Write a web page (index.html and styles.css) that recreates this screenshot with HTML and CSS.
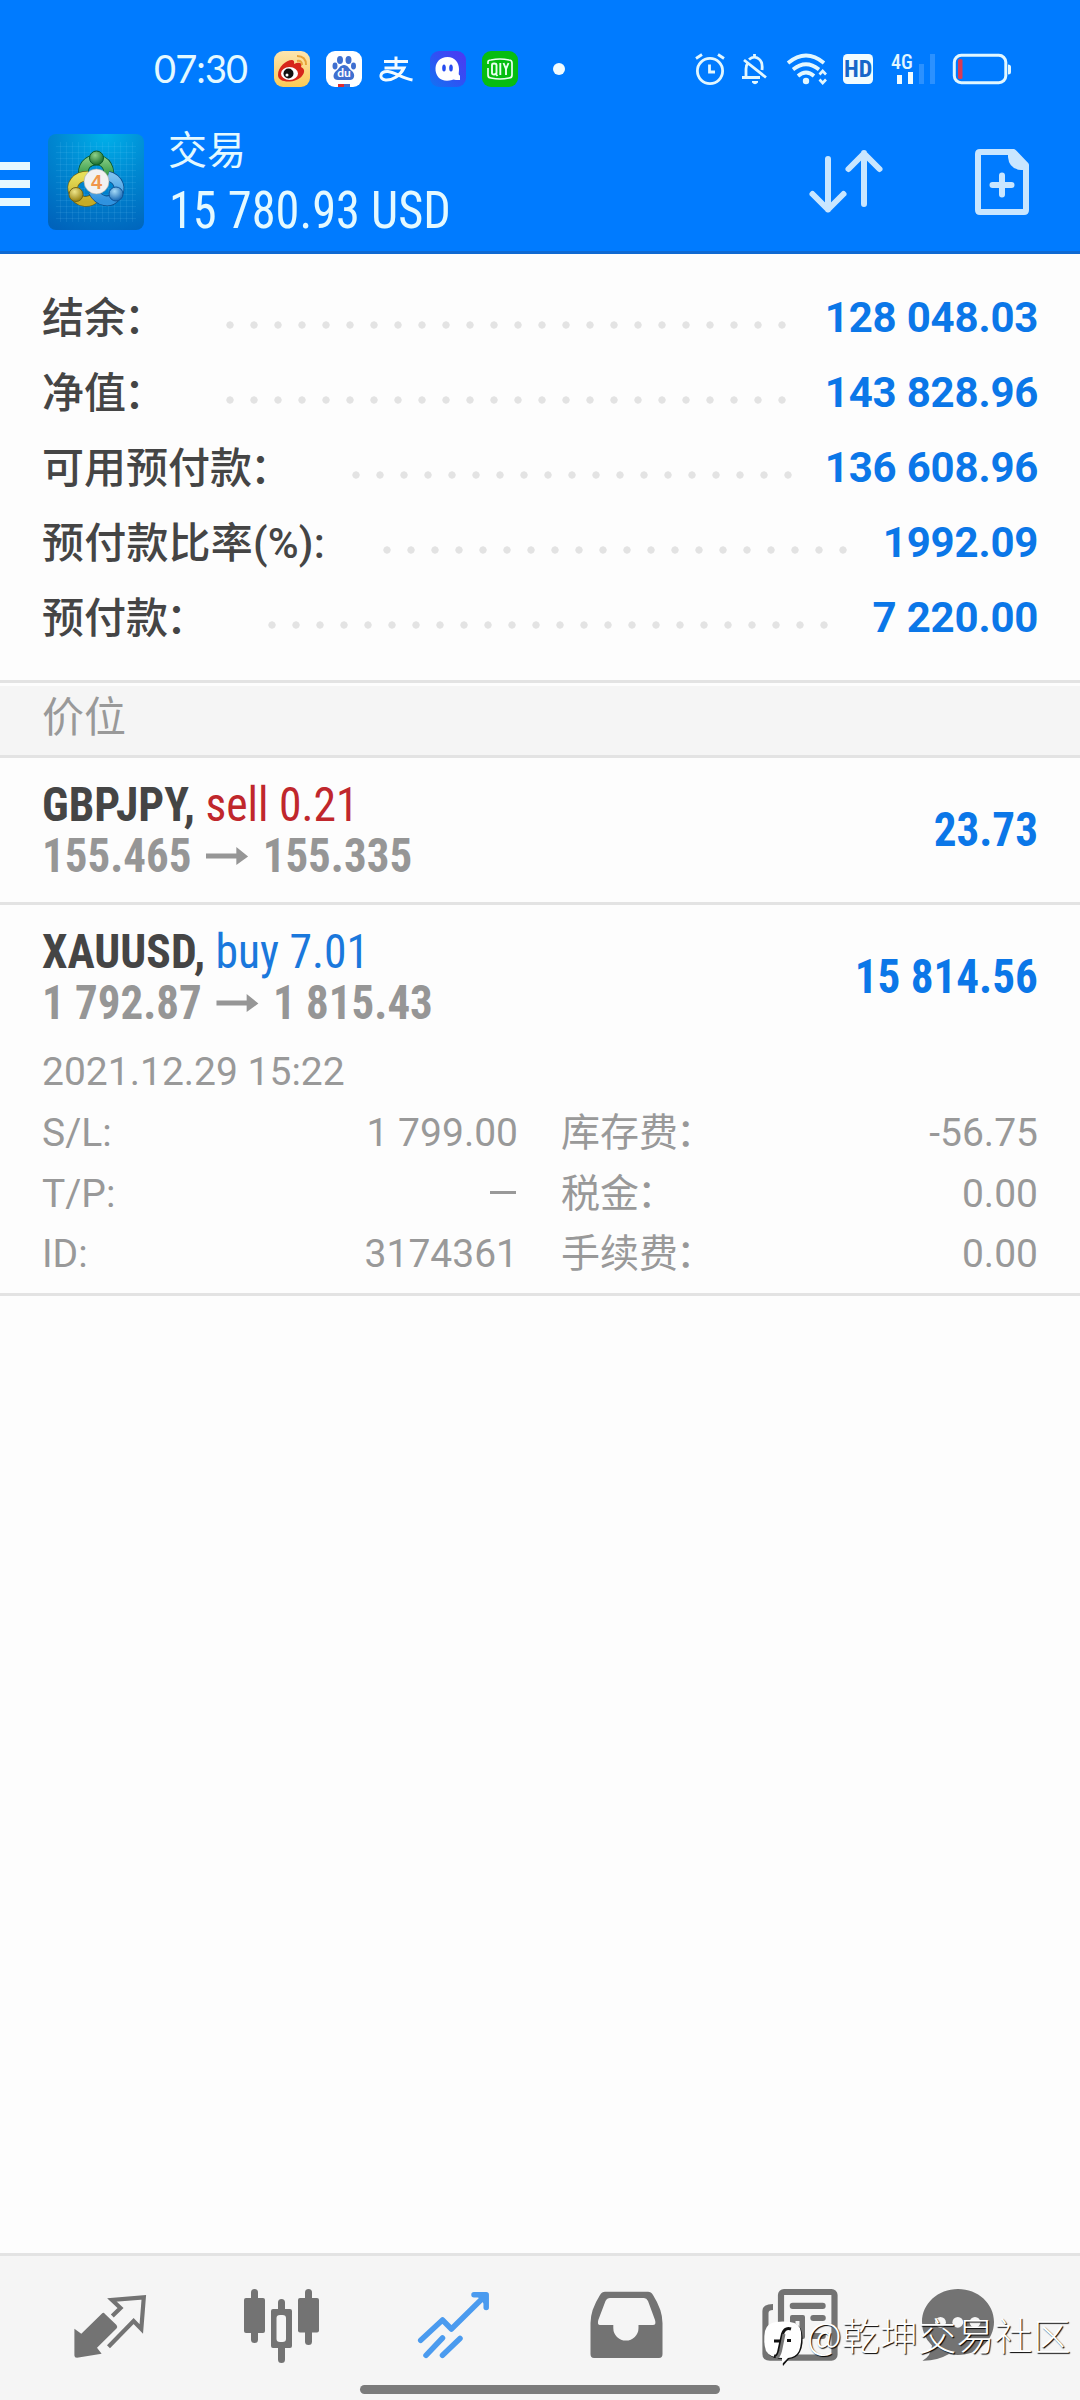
FILE: index.html
```
<!DOCTYPE html>
<html lang="zh-CN">
<head>
<meta charset="utf-8">
<title>交易</title>
<link rel="stylesheet" href="styles.css">
</head>
<body>
<div class="screen">
  <header class="top">
    <div class="status">
      <span class="clock">07:30</span>
      <div class="notices">
        <svg width="52" height="36" viewBox="0 0 52 36">
          <defs><linearGradient id="wb" x1="0" y1="0" x2="0" y2="1"><stop offset="0" stop-color="#fde5b0"/><stop offset="1" stop-color="#fbcb55"/></linearGradient></defs>
          <rect x="8" width="36" height="36" rx="9" fill="url(#wb)"/>
          <path d="M12 24C12 16 20 9 26 9C29 9 28 13 28 13C32 11 37 11 35 16C40 18 38 23 36 25C31 32 12 33 12 24Z" fill="#d7261b"/>
          <ellipse cx="23.500" cy="22.500" rx="8.500" ry="6.500" fill="#fff"/>
          <circle cx="22.500" cy="22.500" r="5" fill="#111"/><circle cx="21" cy="24" r="1.500" fill="#fff"/>
          <path d="M31 5Q40 5 40 14M31 10Q36 9 36 14" fill="none" stroke="#e7a23a" stroke-width="2"/>
        </svg>
        <svg width="52" height="36" viewBox="0 0 52 36">
          <rect x="8" width="36" height="36" rx="9" fill="#fff"/>
          <g fill="#3f6fd0"><ellipse cx="22" cy="9" rx="3" ry="4"/><ellipse cx="30.500" cy="9" rx="3" ry="4"/><ellipse cx="17" cy="15" rx="2.500" ry="3.400"/><ellipse cx="35.500" cy="15" rx="2.500" ry="3.400"/>
          <path d="M26 14C30 14 31 18 34 20C38 24 36 29 32 29H20C15 29 14 24 18 20C21 18 22 14 26 14Z"/></g>
          <text x="26" y="26" class="du">du</text>
          <rect x="20" y="33" width="6" height="3" fill="#e02b30"/><rect x="26" y="33" width="6" height="3" fill="#3f6fd0"/>
        </svg>
        <svg width="52" height="36" viewBox="0 0 52 36" fill="none" stroke="#f2fbff" stroke-width="3">
          <path d="M14 10.500H38M26 5.500V16M14.500 17H34C30 25 22 29.500 15.500 29C8.500 28 9.500 20 18 20.500C26 21.500 32 27 42.500 29"/>
        </svg>
        <svg width="52" height="36" viewBox="0 0 52 36">
          <defs><linearGradient id="qq" x1="0" y1="1" x2="1" y2="0"><stop offset="0" stop-color="#1273f2"/><stop offset=".5" stop-color="#2f52f4"/><stop offset="1" stop-color="#5136f2"/></linearGradient></defs>
          <rect x="8" width="36" height="36" rx="9" fill="url(#qq)"/>
          <path d="M25.500 6C33 6 37 12 37 18C37 22 36 24 38 24.500V29H34Q31 28 30 29C20 32 13 26 13.500 17C14 11 18 6 25.500 6Z" fill="#fff"/>
          <ellipse cx="22" cy="17" rx="1.800" ry="3.500" fill="#264cf0"/><ellipse cx="29" cy="17" rx="1.800" ry="3.500" fill="#264cf0"/>
        </svg>
        <svg width="52" height="36" viewBox="0 0 52 36">
          <rect x="8" width="36" height="36" rx="9" fill="#06bd10"/>
          <path d="M14 13V11Q14 9 17 9Q26 7 35 9Q38 9 38 12V24Q38 27 35 27Q26 29 17 27Q14 27 14 24V17" fill="none" stroke="#e9fff0" stroke-width="1.700"/>
          <path d="M18 14Q18 12.500 20 12.500Q22.500 12.500 22.500 14V22Q22.500 23.500 20 23.500Q18 23.500 18 22ZM21 22L23.500 25M26.300 12V24M29.500 12L32 18L34.500 12M32 18V24" fill="none" stroke="#e9fff0" stroke-width="1.900"/>
        </svg>
      </div>
      <i class="dot"></i>
      <div class="system">
        <svg class="alarm" width="32" height="36" viewBox="694 51 32 36" fill="none" stroke="#e2f7ff" stroke-width="2.800">
          <circle cx="710" cy="71" r="12.600"/><path d="M709.500 64.500V72H715M696 58.500L702 54.500M718 54.500L724 58.500"/>
        </svg>
        <svg class="bell" width="30" height="36" viewBox="740 51 30 36" fill="none" stroke="#e2f7ff" stroke-width="2.800">
          <path d="M744 60L766 77.500M742 77.500H760M746 76V69Q746 65 748 63M749 59.500Q754 55 759 59Q763 62 762 70M754.500 54V57"/><path d="M752 81H758V82.500Q755 86 752 82.500Z" fill="#e2f7ff" stroke="none"/>
        </svg>
        <svg class="wifi" width="42" height="36" viewBox="786 51 42 36" fill="none" stroke="#e2f7ff" stroke-width="3.700">
          <path d="M788 63Q806 48 824 63M793 69.500Q806 59 819 69.500M798 76Q806 69 814 76"/><circle cx="806" cy="81" r="3.200" fill="#e2f7ff" stroke="none"/><path d="M819.500 74.500L822.700 71L826 74.500M819.500 79.500L822.700 83L826 79.500" stroke-width="2.600"/>
        </svg>
        <svg class="hd" width="31" height="36" viewBox="843 51 31 36">
          <rect x="843" y="54" width="30" height="30" rx="4.500" fill="#f1fcff"/><text x="858.200" y="77" class="hd-text">HD</text>
        </svg>
        <svg class="cell" width="46" height="36" viewBox="890 51 46 36">
          <text x="891" y="69" class="net">4G</text>
          <path d="M897 75h5v9h-5zM908 72h5v12h-5z" fill="#f1fcff"/><path d="M919 64h5v20h-5zM930 54h5v30h-5z" fill="#2b91ff"/>
        </svg>
        <svg class="battery" width="60" height="36" viewBox="952 51 60 36">
          <rect x="954.300" y="55.300" width="51.500" height="27.400" rx="7" fill="none" stroke="#e2f7ff" stroke-width="3"/>
          <rect x="958" y="59" width="4.500" height="20" rx="1.500" fill="#d93a55"/><path d="M1008 64.500Q1011 64.500 1011 67V72Q1011 74.500 1008 74.500Z" fill="#e2f7ff"/>
        </svg>
      </div>
    </div>
    <div class="bar">
      <div class="menu"><i></i><i></i><i></i></div>
      <svg class="logo" width="96" height="96" viewBox="0 0 96 96">
        <defs>
          <radialGradient id="bg" cx=".6" cy="0" r="1.100"><stop offset="0" stop-color="#00b0ea"/><stop offset=".45" stop-color="#0089d2"/><stop offset="1" stop-color="#0063bb"/></radialGradient>
          <linearGradient id="g1" x1="0" y1="0" x2="0" y2="1"><stop offset="0" stop-color="#7cc67c"/><stop offset="1" stop-color="#1d8a35"/></linearGradient>
          <linearGradient id="g2" x1="0" y1="0" x2="0" y2="1"><stop offset="0" stop-color="#e6df5a"/><stop offset="1" stop-color="#c7ab25"/></linearGradient>
          <linearGradient id="g3" x1="0" y1="0" x2="0" y2="1"><stop offset="0" stop-color="#7cc0ee"/><stop offset="1" stop-color="#2f92df"/></linearGradient>
          <radialGradient id="h1" cx=".4" cy=".3" r=".7"><stop offset="0" stop-color="#8fd28a"/><stop offset="1" stop-color="#176c2b"/></radialGradient>
          <radialGradient id="h2" cx=".4" cy=".3" r=".7"><stop offset="0" stop-color="#efe68a"/><stop offset="1" stop-color="#96800f"/></radialGradient>
          <radialGradient id="h3" cx=".4" cy=".3" r=".7"><stop offset="0" stop-color="#a5daf7"/><stop offset="1" stop-color="#1768b4"/></radialGradient>
          <pattern id="grid" width="6" height="6" patternUnits="userSpaceOnUse"><path d="M0 .5H6M.5 0V6" stroke="#8fe0ff" stroke-opacity=".1"/></pattern>
        </defs>
        <rect width="96" height="96" rx="8" fill="url(#bg)"/><rect x="8" y="8" width="80" height="80" fill="url(#grid)"/>
        <g fill="none" stroke-width="9">
          <path d="M36 44C33 32 40 26 48.500 26C58 26 63 35 60 46" stroke="#0b5527" stroke-width="10.500"/><path d="M36 44C33 32 40 26 48.500 26C58 26 63 35 60 46" stroke="url(#g1)"/>
          <path d="M40 42C28 42 22 51 26 59C30 69 41 70 48 63" stroke="#6c6215" stroke-width="10.500"/><path d="M40 42C28 42 22 51 26 59C30 69 41 70 48 63" stroke="url(#g2)"/>
          <path d="M60 42C71 45 74 55 68 62C62 70 51 68 45 57" stroke="#0c4b89" stroke-width="10.500"/><path d="M60 42C71 45 74 55 68 62C62 70 51 68 45 57" stroke="url(#g3)"/>
        </g>
        <circle cx="48.500" cy="24" r="7" fill="url(#h1)" stroke="#0c5a25"/><circle cx="28" cy="60.500" r="7" fill="url(#h2)" stroke="#756514"/><circle cx="68" cy="60" r="7" fill="url(#h3)" stroke="#0f559b"/>
        <circle cx="48.500" cy="47.500" r="12.500" fill="#f1f1f1" stroke="#a2a8a2" stroke-width=".6"/><text x="48.500" y="55" class="four">4</text>
      </svg>
      <div class="titles"><div class="title">交易</div><div class="profit">15 780.93 USD</div></div>
      <svg class="sort" width="76" height="68" viewBox="808 148 76 68" fill="none" stroke="#c9e6ff" stroke-width="6" stroke-linecap="round" stroke-linejoin="round">
        <path d="M828 159V209.500M812.500 194L828 209.500L843.500 194M864 204V153M848.500 169L864 153.500L879.500 169"/>
      </svg>
      <svg class="add" width="56" height="68" viewBox="974 148 56 68" fill="none" stroke="#c9e6ff" stroke-width="6" stroke-linecap="round" stroke-linejoin="round">
        <path d="M980 152H1013.500L1026 165V210Q1026 212 1024 212H980Q978 212 978 210V154Q978 152 980 152Z"/><path d="M1008 152V157Q1009 169 1021 170H1027V164L1014 151Z" fill="#c9e6ff" stroke="none"/><path d="M1002 175.500V194.500M992.500 185H1011.500"/>
      </svg>
    </div>
  </header>

  <section class="account">
    <div class="row"><span class="label">结余<span class="colon">：</span></span><i class="dots"></i><b>128 048.03</b></div>
    <div class="row"><span class="label">净值<span class="colon">：</span></span><i class="dots"></i><b>143 828.96</b></div>
    <div class="row"><span class="label">可用预付款<span class="colon">：</span></span><i class="dots dots-19"></i><b>136 608.96</b></div>
    <div class="row"><span class="label wide">预付款比率(%):</span><i class="dots dots-20"></i><b>1992.09</b></div>
    <div class="row"><span class="label">预付款<span class="colon">：</span></span><i class="dots"></i><b>7 220.00</b></div>
  </section>

  <h2 class="section">价位</h2>

  <article class="position">
    <div class="summary">
      <div>
        <div class="deal"><b>GBPJPY,</b> <span class="sell">sell 0.21</span></div>
        <div class="prices">155.465<svg width="46" height="20" viewBox="0 0 44 20" preserveAspectRatio="none"><path d="M0 7.500H31V1L43 10.500L31 19V12.500H0Z" fill="#969696"/></svg>155.335</div>
      </div>
      <span class="result">23.73</span>
    </div>
  </article>

  <article class="position">
    <div class="summary">
      <div>
        <div class="deal"><b>XAUUSD,</b> <span class="buy">buy 7.01</span></div>
        <div class="prices">1 792.87<svg width="46" height="20" viewBox="0 0 44 20" preserveAspectRatio="none"><path d="M0 7.500H31V1L43 10.500L31 19V12.500H0Z" fill="#969696"/></svg>1 815.43</div>
      </div>
      <span class="result">15 814.56</span>
    </div>
    <div class="details">
      <div class="time">2021.12.29 15:22</div>
      <div class="grid">
        <span>S/L:</span><span class="num">1 799.00</span><span class="fee">库存费<span class="colon">：</span></span><span class="num">-56.75</span>
        <span>T/P:</span><span class="num"><i class="dash"></i></span><span class="fee">税金<span class="colon">：</span></span><span class="num">0.00</span>
        <span>ID:</span><span class="num">3174361</span><span class="fee">手续费<span class="colon">：</span></span><span class="num">0.00</span>
      </div>
    </div>
  </article>

  <nav class="tabs">
    <svg width="172" height="144" viewBox="0 0 172 144"><path d="M50.400 72.700L57.300 77.700L78 57.500Q79.500 56 81 58L92.500 69Q94 71 92.500 72.500L73 91.700L77.600 97.700L53 101.700Q50.400 101.700 50.400 99.500Z" fill="#737373"/><path d="M88.300 60L96.500 52L88 44L119.800 41.300L117.300 73L109.600 65L84.500 90.700" fill="none" stroke="#737373" stroke-width="4.200"/></svg>
    <svg width="172" height="144" viewBox="0 0 172 144" fill="#737373"><rect x="48" y="42" width="21" height="35" rx="2"/><rect x="55" y="33" width="7" height="54" rx="3.500"/><path fill-rule="evenodd" d="M77 53H94Q96 53 96 55V90Q96 92 94 92H77Q75 92 75 90V55Q75 53 77 53ZM84 59Q80.500 59 80.500 62V83Q80.500 86 84 86H86.500Q90 86 90 83V62Q90 59 86.500 59Z"/><path d="M82 54V46.500A3.500 3.500 0 0 1 89 46.500V54ZM82 91V103.500A3.500 3.500 0 0 0 89 103.500V91Z"/><rect x="102" y="42" width="21" height="34.500" rx="2"/><rect x="109" y="33" width="7" height="56" rx="3.500"/></svg>
    <svg width="172" height="144" viewBox="0 0 172 144" fill="none" stroke="#4b9bef" stroke-width="5.500" stroke-linecap="round" stroke-linejoin="round"><path d="M52.700 84.300L74.500 64L83.400 73L117.900 39M106 38.700H118.200V51.500"/><path d="M109 40H118V50Z" fill="#4b9bef" stroke="none"/><path d="M58 99.300L74.500 82M74.500 99.300L92 82.500"/></svg>
    <svg width="172" height="144" viewBox="0 0 172 144"><path fill-rule="evenodd" fill="#737373" d="M65 35.700H108Q111 35.700 113 39Q122.500 54 122.500 67V98Q122.500 102 119 102H54Q50.500 102 50.500 98V67Q50.500 54 60 39Q62 35.700 65 35.700ZM70 42Q67 42 65.500 45L58.300 64Q57 69 60 69H73.300V72A12.600 12.600 0 0 0 98.500 72V69H113Q116.500 69 115 64L108 45Q106.500 42 104 42Z"/></svg>
    <svg width="172" height="144" viewBox="0 0 172 144"><rect x="69" y="36" width="53.500" height="65.700" rx="3" fill="none" stroke="#737373" stroke-width="6.200"/><path d="M61 48Q50.400 48 50.400 55V98Q50.400 104.700 58 104.700H72V98H58Q56.500 98 56.500 96V57Q56.500 54 61 54Z" fill="#737373"/><g fill="#737373"><rect x="77.700" y="46.700" width="36" height="6.300" rx="3"/><path fill-rule="evenodd" d="M80 59H91Q93 59 93 61V81Q93 83 91 83H80Q78 83 78 81V61Q78 59 80 59ZM83.500 65V77H87.500V65Z"/><rect x="98.300" y="59" width="15.500" height="6" rx="3"/><rect x="98.300" y="77" width="15.500" height="6" rx="3"/></g></svg>
    <svg width="172" height="144" viewBox="0 0 172 144"><path d="M74 33C94 33 110 47.500 110 66C110 84 94 99 74 99C71 99 68 98.700 65 98Q53 105 38.500 104.700Q47 100 48 89.500Q38 80 38 66C38 47.500 54 33 74 33Z" fill="#737373"/><g fill="#f5f5f5"><circle cx="56.500" cy="66.300" r="5.400"/><circle cx="73.800" cy="66.300" r="5.400"/><circle cx="91" cy="66.300" r="5.400"/></g></svg>
    <i class="home"></i>
    <div class="mark">
      <svg width="42" height="46" viewBox="0 0 42 46"><path d="M14 2Q21 1 28 2Q38 3 39 12Q41 23 37 31Q34 37 26 38L20 45L19 38Q8 38 4 31Q0 22 3 11Q6 3 14 2Z" fill="#111"/><path d="M13 1Q20 0 27 1Q37 2 38 11Q39 22 36 30Q33 36 25 37L19 43L19 37Q7 37 3 30Q0 21 2 10Q4 2 13 1Z" fill="#fff"/><path d="M28 8Q22 6 19.500 13L16 29Q15 36 11 35M11 20H20M24 19.500H28" fill="none" stroke="#111" stroke-width="3"/><path d="M21 13L17.500 30Q16 36 13 37" fill="none" stroke="#777" stroke-width="3"/></svg>
      <span>@乾坤交易社区</span>
    </div>
  </nav>
</div>
</body>
</html>
```
FILE: styles.css
```
* { box-sizing: border-box; }
body { margin: 0; background: #fdfdfd; font-family: Roboto, "Noto Sans CJK SC", sans-serif; }
i { font-style: normal; }
svg { display: block; flex: none; }
.screen { width: 1080px; height: 2400px; display: flex; flex-direction: column; overflow: hidden; background: #fdfdfd; }

/* Header: system status and app bar */
.top { height: 254px; background: #007bff; border-bottom: 3px solid #0f69d2; color: #e4f9ff; }
.status { height: 110px; padding: 51px 0 0 154px; display: flex; align-items: flex-start; }
.clock { width: 112px; font: 38px/35px Lato, sans-serif; letter-spacing: -0.9px; }
.notices { display: flex; width: 260px; }
.dot { width: 12px; height: 12px; margin: 12px 0 0 27px; border-radius: 50%; background: #f1fcff; }
.system { display: flex; margin-left: 129px; }
.bell { margin-left: 14px; }
.wifi { margin-left: 16px; }
.hd { margin-left: 15px; }
.cell { margin-left: 16px; }
.battery { margin-left: 16px; }
.du { font: bold 12px Lato, sans-serif; fill: #fff; text-anchor: middle; }
.hd-text { font: bold 24px "Roboto Condensed", sans-serif; fill: #1767c9; text-anchor: middle; }
.net { font: 500 20px "Roboto Condensed", sans-serif; fill: #e2f7ff; }
.four { font: bold 20px "Liberation Sans", sans-serif; fill: #f0964a; text-anchor: middle; }

.bar { height: 141px; display: flex; align-items: flex-start; }
.menu { width: 30px; margin-top: 52px; display: flex; flex-direction: column; gap: 10px; }
.menu i { height: 8px; background: #e6f8ff; }
.logo { margin: 24px 0 0 18px; }
.titles { width: 640px; margin-left: 24px; padding-top: 16px; }
.title { font-size: 39px; line-height: 50px; }
.profit { margin-top: 5px; padding-left: 1px; font: 52px/60px "Roboto Condensed", sans-serif; transform: scaleX(0.93); transform-origin: left; }
.sort { margin-top: 38px; }
.add { margin: 38px 0 0 90px; }

/* Account figures with dotted leaders */
.account { height: 426px; padding-top: 27px; }
.row { height: 75px; padding: 0 42px; display: flex; align-items: center; font-size: 42px; }
.label { font-weight: 500; color: #454545; white-space: nowrap; line-height: 60px; }
.wide { letter-spacing: 0.2px; }
.colon { margin: 0 2px 0 -2px; }
.row b { margin: -2px -0.2px 0 auto; color: #0b77e8; line-height: 60px; letter-spacing: -0.2px; }
.dots { flex: none; width: 576px; height: 8px; margin: 12px 0 0 50px; background: radial-gradient(circle at 12px 4px, #e3e3e3 3.3px, transparent 4px) 0 0 / 24px 8px repeat-x; }
.dots-19 { width: 456px; }
.dots-20 { width: 480px; }

.section { height: 78px; margin: 0; padding: 5px 42px 0; border-top: 3px solid #e3e3e3; border-bottom: 3px solid #e3e3e3; background: linear-gradient(#fdfdfd 3px, #f5f5f5 3px); font-size: 42px; font-weight: 400; line-height: 60px; color: #999; }

/* Open positions */
.position { border-bottom: 3px solid #e3e3e3; }
.summary { height: 144px; padding: 21px 42px 0; display: flex; justify-content: space-between; font-family: "Roboto Condensed", sans-serif; font-size: 48px; line-height: 51px; white-space: nowrap; }
.deal { transform: scaleX(0.949); transform-origin: left; }
.deal b { color: #454545; }
.sell { color: #c0272c; }
.buy { color: #1a78dc; }
.prices { display: flex; align-items: center; gap: 15px; font-weight: 700; color: #969696; transform: scaleX(0.937); transform-origin: left; }
.result { padding-top: 25px; font-weight: 700; color: #0b77e8; transform: scaleX(0.94); transform-origin: right; }
.details { height: 244px; padding: 3px 42px 0; font-size: 39px; color: #999; }
.time { height: 41px; line-height: 41px; }
.grid { display: grid; grid-template-columns: 120px 356px 240px 1fr; grid-auto-rows: 60.500px; line-height: 60px; padding-top: 10px; white-space: nowrap; }
.num { text-align: right; }
.fee { padding-left: 43px; }
.dash { display: inline-block; width: 26px; height: 3px; margin-right: 2px; background: #999; vertical-align: 13px; }

/* Bottom tabs */
.tabs { position: relative; margin-top: auto; height: 147px; padding: 0 24px; display: flex; border-top: 3px solid #e3e3e3; background: #f5f5f5; }
.home { position: absolute; left: 360px; top: 129px; width: 360px; height: 9px; border-radius: 5px; background: #7b7b7b; }
.mark { position: absolute; left: 763px; top: 65px; display: flex; font: 300 38px/34px "Noto Sans CJK SC", sans-serif; color: #fff; text-shadow: 1px 1px 1px #000; white-space: nowrap; }
.mark span { margin: -4px 0 0 2px; letter-spacing: 0.2px; }
```
